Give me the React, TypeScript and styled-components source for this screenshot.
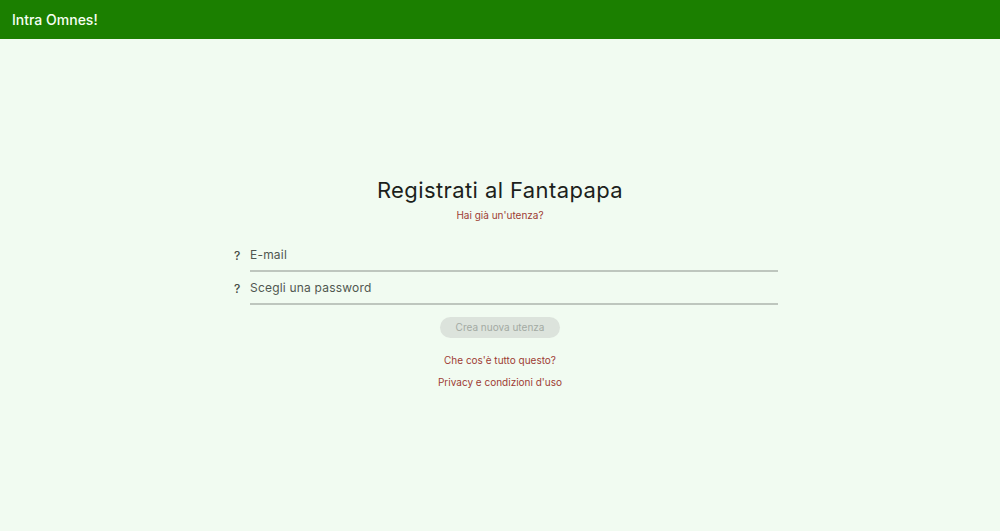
import React from "react";
import styled, { createGlobalStyle } from "styled-components";

const Global = createGlobalStyle`
  html, body { margin: 0; padding: 0; height: 100%; }
  body { background: #f1fbf1; font-family: Inter, "Noto Sans", sans-serif; }
  #root { height: 100%; }
`;

const Page = styled.div`
  display: flex;
  flex-direction: column;
  height: 531px;
`;

const Header = styled.header`
  height: 39px;
  flex: 0 0 39px;
  background: #1b7f00;
  display: flex;
  align-items: center;
  padding-left: 12px;
  color: #f6fff2;
  font-size: 14px;
  font-weight: 500;
`;

const Main = styled.main`
  flex: 1;
  display: flex;
  align-items: center;
  justify-content: center;
  padding-bottom: 6px;
`;

const Form = styled.div`
  width: 560px;
  display: flex;
  flex-direction: column;
  align-items: center;
`;

const Title = styled.h1`
  margin: 0;
  font-size: 22px;
  font-weight: 400;
  letter-spacing: 0.4px;
  color: #1c1f1c;
  line-height: 28px;
`;

const Link = styled.a`
  color: #9e3b34;
  font-size: 10px;
  line-height: 14px;
  text-decoration: none;
  margin-top: ${(p: { $mt: number }) => p.$mt}px;
`;

const Field = styled.label`
  align-self: stretch;
  display: flex;
  align-items: center;
  padding: 0 2px 0 14px;
  margin-top: ${(p: { $mt: number }) => p.$mt}px;
`;

const Hint = styled.span`
  width: 16px;
  font-size: 12px;
  font-weight: 500;
  color: #454c45;
`;

const Input = styled.input`
  flex: 1;
  height: 31px;
  border: none;
  border-bottom: 2px solid #bec6be;
  background: transparent;
  font-family: inherit;
  font-size: 12px;
  letter-spacing: 0.2px;
  color: #3f463f;
  padding: 0;
  outline: none;
  &::placeholder { color: #505750; }
`;

const Button = styled.button`
  margin-top: 12px;
  width: 120px;
  height: 21px;
  border: none;
  border-radius: 11px;
  background: #dce3dc;
  color: #a3aaa3;
  font-family: inherit;
  font-size: 10px;
  padding: 0;
`;

export default function App() {
  return (
    <>
      <Global />
      <Page>
        <Header>Intra Omnes!</Header>
        <Main>
          <Form>
            <Title>Registrati al Fantapapa</Title>
            <Link $mt={4}>Hai già un'utenza?</Link>
            <Field $mt={17}>
              <Hint>?</Hint>
              <Input placeholder="E-mail" />
            </Field>
            <Field $mt={0}>
              <Hint>?</Hint>
              <Input placeholder="Scegli una password" type="password" />
            </Field>
            <Button disabled>Crea nuova utenza</Button>
            <Link $mt={15}>Che cos'è tutto questo?</Link>
            <Link $mt={8}>Privacy e condizioni d'uso</Link>
          </Form>
        </Main>
      </Page>
    </>
  );
}
